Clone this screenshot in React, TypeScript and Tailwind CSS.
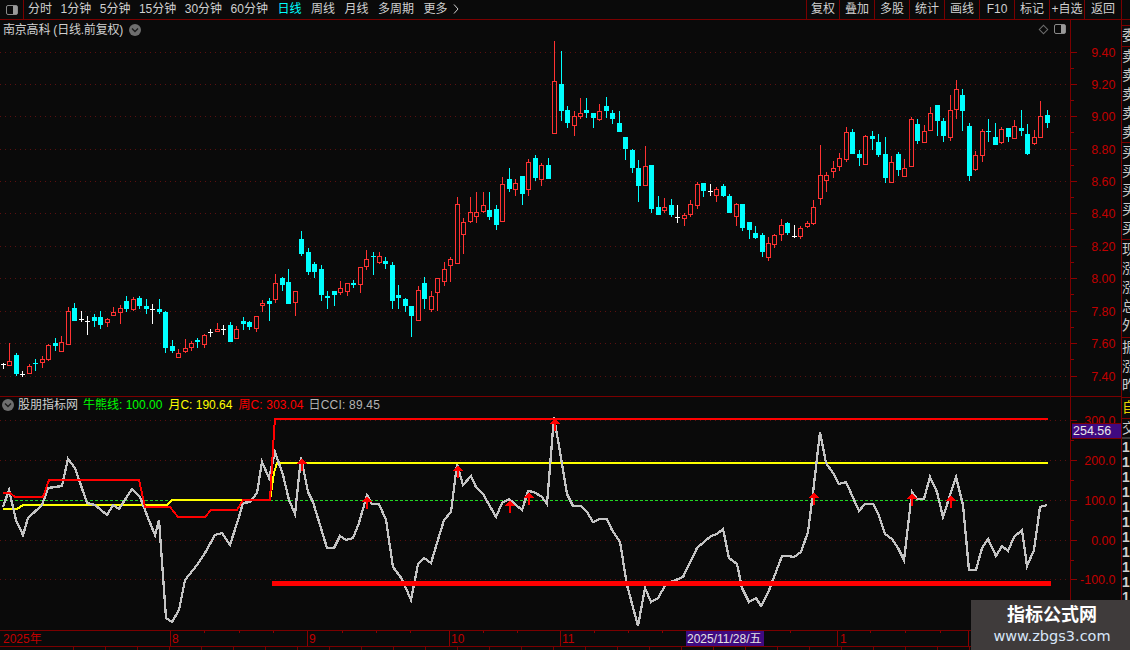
const RED = "#ff3232"
const AXIS = "#8c0000"
const GRID = "#5c1010"

type Candle = ["r" | "c" | "w", number, number, number, number]

// high, body top, body bottom, low, all in page pixels
const candles: Candle[] = [
    ["w",363,364,364,369],["r",343,361,365,365],["c",353,355,374,376],["w",371,374,374,377],["r",364,366,373,374],
    ["c",359,363,363,371],["r",356,359,362,368],["r",344,345,359,361],["c",338,343,346,351],["r",336,342,351,351],
    ["r",307,311,344,344],["c",303,308,321,321],["w",311,319,319,322],["w",316,321,321,335],["c",314,317,321,327],
    ["c",311,317,325,329],["r",318,319,322,327],["r",307,312,315,316],["r",305,308,312,324],["c",296,301,309,312],
    ["r",297,299,309,311],["c",296,298,306,309],["c",299,306,309,314],["w",304,309,309,324],["c",299,309,312,314],
    ["c",311,312,348,353],["c",340,346,351,353],["r",349,353,357,358],["r",339,348,351,353],["r",341,343,347,351],
    ["c",338,340,342,348],["r",334,335,344,348],["w",329,332,332,337],["r",323,329,331,331],["w",325,329,329,335],
    ["c",322,325,342,342],["r",326,329,338,338],["c",317,321,324,330],["c",321,322,327,330],["r",316,316,328,332],
    ["r",300,303,305,312],["c",298,301,304,321],["r",274,283,299,303],["c",277,278,285,291],["c",269,282,304,304],
    ["r",291,291,302,316],["c",231,239,254,256],["c",248,252,272,275],["c",262,264,272,278],["c",265,269,295,301],
    ["c",291,296,298,309],["c",291,291,295,306],["r",281,288,292,295],["r",283,283,291,296],["c",280,283,285,288],
    ["r",267,267,284,293],["r",250,259,266,270],["c",252,256,257,275],["r",252,256,262,264],["c",257,261,264,269],
    ["c",262,265,301,309],["c",285,295,298,309],["c",298,299,306,312],["c",306,306,316,337],["r",286,290,320,321],
    ["c",277,283,299,309],["r",291,296,309,312],["r",278,278,292,311],["r",262,269,281,286],["r",257,259,265,282],
    ["r",197,204,263,264],["r",218,222,234,254],["r",197,212,221,223],["r",192,212,216,223],["r",192,205,211,213],
    ["c",192,210,217,220],["c",205,209,225,230],["r",177,184,221,221],["c",168,179,189,192],["r",179,183,189,196],
    ["c",176,176,194,205],["r",159,162,189,196],["c",155,158,178,181],["r",163,165,179,186],["c",158,165,179,179],
    ["r",41,81,133,133],["c",51,84,111,121],["c",106,110,123,128],["r",111,116,125,136],["r",98,113,116,119],
    ["c",98,110,113,118],["c",113,113,118,128],["r",104,111,119,121],["c",97,106,111,118],["c",110,113,119,124],
    ["c",111,123,132,132],["c",137,137,149,160],["c",149,150,168,173],["c",160,168,186,202],["r",146,166,185,185],
    ["c",165,165,209,213],["c",196,207,215,215],["r",198,207,210,213],["c",199,205,215,217],["w",205,217,217,223],
    ["r",213,215,218,226],["r",200,204,214,217],["r",182,184,205,209],["c",183,183,191,197],["w",184,191,191,196],
    ["r",187,189,195,202],["c",184,186,196,197],["c",194,196,213,213],["r",203,204,216,226],["c",204,204,228,231],
    ["c",222,222,230,239],["c",226,233,238,239],["c",233,235,252,257],["r",237,243,257,261],["r",234,235,244,248],
    ["r",219,225,234,241],["c",222,223,233,235],["w",225,236,236,238],["r",226,228,236,239],["r",221,223,226,228],
    ["r",200,207,223,225],["r",145,175,198,205],["r",172,175,180,192],["r",161,168,171,178],["r",153,158,166,171],
    ["r",127,132,159,162],["c",129,132,154,154],["c",150,154,158,166],["r",135,136,164,164],["c",131,136,139,150],
    ["c",134,142,155,157],["c",137,154,178,183],["r",156,162,182,182],["c",152,154,170,176],["r",159,168,176,176],
    ["r",117,119,166,166],["c",119,124,141,144],["r",125,131,142,142],["r",107,113,130,130],["c",105,105,121,136],
    ["c",118,121,136,142],["r",95,110,137,141],["r",80,89,109,119],["c",89,95,111,131],["c",123,126,176,181],
    ["r",151,155,169,171],["r",129,131,155,162],["c",119,131,132,142],["c",123,137,145,145],["r",127,129,142,144],
    ["c",128,128,137,142],["r",120,126,138,139],["c",110,128,131,136],["c",124,134,154,155],["r",130,137,143,145],
    ["r",101,116,137,137],["c",110,115,123,128],
]

const priceTicks = [
    [52, "9.40"], [84, "9.20"], [116, "9.00"], [149, "8.80"], [181, "8.60"], [213, "8.40"],
    [246, "8.20"], [278, "8.00"], [311, "7.80"], [343, "7.60"], [376, "7.40"],
] as const

const cciTicks = [
    [420, "300.0"], [460, "200.0"], [500, "100.0"], [540, "0.00"], [579, "-100.0"],
] as const

const cciLine = "3,507 9,490 16,520 23,535 28,518 42,505 48,488 62,486 68,459 75,468 87,503 95,505 107,515 113,505 119,509 132,489 140,497 148,518 155,535 159,520 166,618 172,622 179,610 185,580 197,565 205,553 215,535 222,533 230,545 238,520 243,503 250,502 257,493 262,462 269,478 275,452 283,475 289,500 295,514 301,457 308,492 313,502 327,548 334,548 340,536 346,540 353,538 359,523 367,495 372,504 379,504 386,520 393,567 402,579 411,600 418,564 424,558 431,563 444,520 451,512 457,464 463,485 471,476 476,487 483,494 496,517 502,503 509,499 522,510 528,491 534,492 542,497 547,504 554,417 560,452 567,494 573,506 581,506 587,512 593,522 600,519 607,519 612,530 620,542 627,585 638,626 645,588 651,602 658,598 666,584 683,577 697,548 711,536 717,534 723,529 729,558 737,564 742,588 749,602 756,598 761,606 768,593 782,556 788,556 794,557 801,552 808,532 813,493 820,432 826,463 833,473 839,484 846,482 859,511 865,504 873,504 878,513 885,534 892,539 898,548 904,560 912,492 917,499 924,499 930,477 937,492 943,517 956,477 963,505 969,570 976,570 982,548 988,539 996,556 1002,546 1008,551 1014,537 1022,530 1027,566 1034,550 1040,507 1047,505"
const monthLine = "3,509 17,509 23,505 167,505 172,500 270,500 274,473 277,463 1048,463"
const weekLine = "3,493 10,493 15,497 43,497 49,480 139,480 145,507 170,507 178,517 205,517 211,510 237,510 243,500 270,500 274,432 275,419 1048,419"

// arrow x, tip y
const arrows = [[302,458],[367,496],[458,465],[510,500],[529,492],[555,418],[814,492],[912,493],[951,495]]

const leftTabs = ["分时", "1分钟", "5分钟", "15分钟", "30分钟", "60分钟"]
const rightTabs = ["周线", "月线", "多周期"]

function PanelIcon() {
    return (
        <span className="w-[12px] h-[10px] rounded-[2px] border border-[#8a8a8a] flex justify-end">
            <span className="w-[4px] bg-[#9a9a9a]" />
        </span>
    )
}

function Chevron({ size = "size-[12px]" }: { size?: string }) {
    return (
        <span className={`${size} rounded-full bg-[#6e6e6e] flex items-center justify-center shrink-0`}>
            <svg width="8" height="6" viewBox="0 0 8 6" fill="none">
                <path d="M1 1.5 4 4.5 7 1.5" stroke="#1c1c1c" strokeWidth="1.4" />
            </svg>
        </span>
    )
}

function Toolbar() {
    return (
        <div className="h-[20px] shrink-0 flex border-b border-[#7a0000] text-[12px] text-[#d0d0d0] leading-[19px]">
            <div className="w-[24px] border-r border-[#7a0000] flex items-center justify-center">
                <PanelIcon />
            </div>
            <div className="ml-[4px] flex gap-[8.5px]">
                {leftTabs.map((t) => <span key={t}>{t}</span>)}
            </div>
            <div className="ml-[9.5px] flex gap-[9.5px]">
                <span className="text-[#00ffff]">日线</span>
                {rightTabs.map((t) => <span key={t}>{t}</span>)}
                <span>更多
                    <svg width="6" height="10" viewBox="0 0 6 10" fill="none" className="inline-block ml-[5px] align-[-1px]">
                        <path d="M1 0.5 5 5 1 9.5" stroke="#d0d0d0" />
                    </svg>
                </span>
            </div>
            <div className="ml-auto mr-[8px] flex border-r border-[#7a0000]">
                <span className="w-[33px] border-l border-[#7a0000] text-center">复权</span>
                <span className="w-[35px] border-l border-[#7a0000] text-center">叠加</span>
                <span className="w-[35px] border-l border-[#7a0000] text-center">多股</span>
                <span className="w-[35px] border-l border-[#7a0000] text-center">统计</span>
                <span className="w-[35px] border-l border-[#7a0000] text-center">画线</span>
                <span className="w-[35px] border-l border-[#7a0000] text-center">F10</span>
                <span className="w-[35px] border-l border-[#7a0000] text-center">标记</span>
                <span className="w-[35px] border-l border-[#7a0000] text-center">+自选</span>
                <span className="w-[37px] border-l border-[#7a0000] text-center">返回</span>
            </div>
        </div>
    )
}

function CandleMark({ c, i }: { c: Candle; i: number }) {
    const [kind, high, top, bot, low] = c
    const x = Math.round(3 + i * 6.483) - 2
    if (kind === "w") {
        return (
            <g fill="#ffffff">
                <rect x={x + 2} y={high} width={1} height={low - high} />
                <rect x={x} y={top} width={5} height={1} />
            </g>
        )
    }
    if (kind === "c") {
        return (
            <g fill="#00ffff">
                <rect x={x + 2} y={high} width={1} height={low - high} />
                <rect x={x} y={top} width={5} height={Math.max(bot - top, 1)} />
            </g>
        )
    }
    return (
        <g>
            <rect x={x + 2} y={high} width={1} height={top - high} fill={RED} />
            <rect x={x + 2} y={bot} width={1} height={low - bot} fill={RED} />
            <rect x={x + 0.5} y={top + 0.5} width={4} height={bot - top} fill="none" stroke={RED} />
        </g>
    )
}

function Axis({ ticks, minY, height, viewTop }: { ticks: readonly (readonly [number, string])[]; minY: number[]; height: number; viewTop: number }) {
    return (
        <svg width="50" height={height} viewBox={`1071 ${viewTop} 50 ${height}`} className="block shrink-0" shapeRendering="crispEdges">
            {ticks.map(([y]) => <rect key={y} x={1071} y={y} width={6} height={1} fill={AXIS} />)}
            {minY.map((y) => <rect key={y} x={1071} y={y} width={3} height={1} fill={AXIS} />)}
            {ticks.map(([y, label]) => (
                <text key={label} x={1115.5} y={y + 5} textAnchor="end" fontSize="12.5" fill="#c00000" shapeRendering="auto">{label}</text>
            ))}
        </svg>
    )
}

function PricePanel() {
    return (
        <div className="h-[377px] shrink-0 flex border-b border-[#7a0000]">
            <div className="relative w-[1071px] border-r border-[#7a0000]">
                <div className="absolute left-[3px] top-[1px] flex items-center gap-[6px] text-[12px] leading-[18px] text-[#d0d0d0]">
                    <span className="tracking-[-0.2px]">南京高科 (日线.前复权)</span>
                    <Chevron />
                </div>
                <div className="absolute right-[4px] top-[4px] flex items-center gap-[7px]">
                    <span className="size-[7px] rotate-45 border border-[#6e6e6e]" />
                    <PanelIcon />
                </div>
                <svg width="1070" height="376" viewBox="0 20 1070 376" className="block" shapeRendering="crispEdges">
                    {priceTicks.map(([y]) => <line key={y} x1="0" x2="1070" y1={y + 0.5} y2={y + 0.5} stroke={GRID} strokeDasharray="1 4" />)}
                    {candles.map((c, i) => <CandleMark key={i} c={c} i={i} />)}
                </svg>
            </div>
            <Axis ticks={priceTicks} minY={[68, 100, 132, 165, 197, 229, 262, 294, 327, 359]} height={376} viewTop={20} />
        </div>
    )
}

function IndicatorPanel() {
    return (
        <div className="h-[233px] shrink-0 flex">
            <div className="relative w-[1071px] border-r border-[#7a0000]">
                <div className="absolute left-[2px] top-[-1px] flex items-center text-[12px] leading-[18px] whitespace-nowrap">
                    <Chevron />
                    <span className="ml-[4px] text-[#d0d0d0]">股朋指标网</span>
                    <span className="ml-[5px] text-[#00ff00]">牛熊线: 100.00</span>
                    <span className="ml-[6px] text-[#ffff00]">月C: 190.64</span>
                    <span className="ml-[6px] text-[#ff0000] tracking-[0.1px]">周C: 303.04</span>
                    <span className="ml-[5px] text-[#b4b4b4] tracking-[0.2px]">日CCI: 89.45</span>
                </div>
                <svg width="1070" height="233" viewBox="0 397 1070 233" className="block" shapeRendering="crispEdges">
                    {cciTicks.map(([y]) => <line key={y} x1="0" x2="1070" y1={y + 0.5} y2={y + 0.5} stroke={GRID} strokeDasharray="1 4" />)}
                    <line x1="0" x2="1045" y1="500.5" y2="500.5" stroke="#22d822" strokeDasharray="3 2" />
                    <polyline points={monthLine} fill="none" stroke="#ffff00" strokeWidth="2" />
                    <polyline points={cciLine} fill="none" stroke="#c4c4c4" strokeWidth="2.3" />
                    <polyline points={weekLine} fill="none" stroke="#ff0000" strokeWidth="2" />
                    <rect x="272" y="581" width="779" height="5" fill="#ff0000" />
                    {arrows.map(([x, y]) => (
                        <path key={x} d={`M${x} ${y}l5 6h-4v7h-2v-7h-4z`} fill="#ff0000" />
                    ))}
                </svg>
            </div>
            <div className="relative w-[50px] shrink-0">
                <Axis ticks={cciTicks} minY={[440, 480, 520, 560]} height={233} viewTop={397} />
                <div className="absolute left-[1px] top-[26px] w-[49px] h-[16px] bg-[#3f0a80] border-y border-[#7a0000] text-[12.5px] leading-[14px] text-[#e8e8e8] pl-[1px]">254.56</div>
            </div>
        </div>
    )
}

function DateAxis() {
    return (
        <div className="h-[17px] shrink-0 border-y border-[#7a0000]">
            <svg width="1121" height="15" viewBox="0 631 1121 15" className="block" shapeRendering="crispEdges">
                {[204, 239, 273, 342, 376, 410, 483, 517, 594, 628, 662, 790, 870, 905, 940].map((x) => (
                    <rect key={x} x={x} y={631} width={1} height={2} fill={AXIS} />
                ))}
                {[170, 307, 449, 560, 837, 968, 1070].map((x) => (
                    <rect key={x} x={x} y={631} width={1} height={15} fill={AXIS} />
                ))}
                <g fontSize="12" fill="#c00000" shapeRendering="auto">
                    <text x="3" y="643">2025年</text>
                    <text x="172" y="643">8</text>
                    <text x="309" y="643">9</text>
                    <text x="451" y="643">10</text>
                    <text x="562" y="643">11</text>
                    <text x="840" y="643">1</text>
                </g>
                <rect x="686" y="631" width="78" height="15" fill="#3f0a80" />
                <text x="687" y="643" fontSize="12" fill="#e4e4e4" shapeRendering="auto">2025/11/28/五</text>
            </svg>
        </div>
    )
}

function SideColumn() {
    const groups = [
        { key: "a", h: "h-[21px]", chars: ["委"] },
        { key: "b", h: "h-[96px]", chars: ["卖", "卖", "卖", "卖", "卖"] },
        { key: "c", h: "h-[97px]", chars: ["买", "买", "买", "买", "买"] },
        { key: "d", h: "h-[98px]", chars: ["现", "涨", "涨", "总", "外"] },
        { key: "e", h: "h-[60px]", chars: ["振", "涨", "昨"] },
    ]
    return (
        <div className="w-[9px] shrink-0 border-l border-[#7a0000] overflow-hidden text-[14px] leading-[19px] text-[#c8c8c8]">
            <div className="h-[5px]" />
            {groups.map((g) => (
                <div key={g.key} className={`${g.h} border-t border-[#7a0000] w-[20px]`}>
                    {g.chars.map((ch, i) => <div key={i}>{ch}</div>)}
                </div>
            ))}
            <div className="h-[21px] border-t border-[#7a0000] w-[20px] text-[#e8d000]">自</div>
            <div className="h-[19px] border-t border-[#7a0000] w-[20px]">交</div>
            <div className="border-t-2 border-[#3a3a3a] w-[20px] font-bold leading-[15px] text-[#d0d0d0] pt-[1px]">
                {Array.from({ length: 14 }, (_, i) => <div key={i}>1</div>)}
            </div>
        </div>
    )
}

export default function App() {
    return (
        <div className="relative w-[1130px] h-[650px] overflow-hidden bg-[#0a0a0a] flex flex-col font-['Liberation_Sans','Noto_Sans_CJK_SC',sans-serif]">
            <Toolbar />
            <div className="flex flex-1 min-h-0">
                <div className="w-[1121px] shrink-0 flex flex-col">
                    <PricePanel />
                    <IndicatorPanel />
                    <DateAxis />
                    <div className="flex-1 flex pl-[42px]">
                        {Array.from({ length: 29 }, (_, i) => <span key={i} className="w-[32px] border-r border-[#7a0000]" />)}
                    </div>
                </div>
                <SideColumn />
            </div>
            {/* Watermark over the corner */}
            <div className="absolute right-0 bottom-0 w-[159px] h-[50px] bg-[#3f3b3b] flex flex-col items-center pl-[3px]">
                <span className="text-[18px] leading-[22px] mt-[4px] font-bold text-white">指标公式网</span>
                <span className="text-[14.5px] leading-[20px] font-['DejaVu_Sans',sans-serif] text-[#d8e6f8]">www.zbgs3.com</span>
            </div>
        </div>
    )
}
